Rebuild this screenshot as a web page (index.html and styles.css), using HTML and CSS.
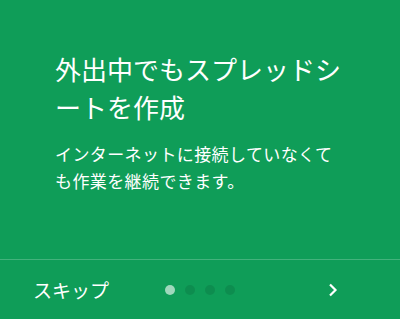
FILE: index.html
```html
<!DOCTYPE html>
<html lang="ja">
<head>
<meta charset="utf-8">
<link rel="stylesheet" href="styles.css">
</head>
<body>
<div class="screen">
  <main class="content">
    <h1 class="title">外出中でもスプレッドシートを作成</h1>
    <p class="desc">インターネットに接続していなくても作業を継続できます。</p>
  </main>
  <footer class="footer">
    <div class="skip">スキップ</div>
    <div class="dots">
      <span class="dot active"></span>
      <span class="dot"></span>
      <span class="dot"></span>
      <span class="dot"></span>
    </div>
    <div class="next">
      <svg width="10" height="14" viewBox="0 0 10 14"><path d="M2 1.5 L7.5 7 L2 12.5" fill="none" stroke="#fff" stroke-width="2.2"/></svg>
    </div>
  </footer>
</div>
</body>
</html>
```
FILE: styles.css
```css
html, body {
  margin: 0;
  padding: 0;
}
body {
  background: #0f9d58;
  font-family: "Noto Sans CJK JP", "Noto Sans", sans-serif;
  color: #fff;
}
.screen {
  width: 400px;
  height: 319px;
  display: flex;
  flex-direction: column;
}
.content {
  flex: 1;
  padding: 50px 55px 0 55px;
}
.title {
  margin: 0;
  font-size: 26px;
  font-weight: 400;
  line-height: 38px;
}
.desc {
  margin: 14px 0 0 0;
  font-size: 17px;
  letter-spacing: 0.4px;
  line-height: 27px;
}
.footer {
  height: 59px;
  border-top: 1px solid rgba(255,255,255,0.22);
  display: grid;
  grid-template-columns: 1fr auto 1fr;
  align-items: center;
}
.skip {
  padding-left: 33px;
  font-size: 19px;
  line-height: 24px;
}
.dots {
  display: flex;
  gap: 10px;
}
.dot {
  width: 10px;
  height: 10px;
  border-radius: 50%;
  background: rgba(0,0,0,0.1);
}
.dot.active {
  background: rgba(255,255,255,0.6);
}
.next {
  display: flex;
  justify-content: flex-end;
  padding-right: 62px;
}
.next svg {
  display: block;
}
```
